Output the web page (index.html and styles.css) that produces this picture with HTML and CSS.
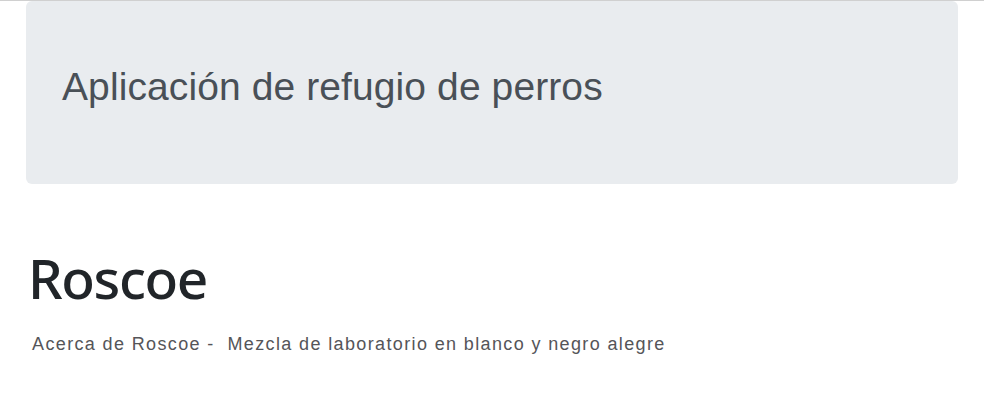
FILE: index.html
```html
<!DOCTYPE html>
<html lang="es">
<head>
<meta charset="utf-8">
<title>Aplicación de refugio de perros</title>
<link rel="stylesheet" href="styles.css">
</head>
<body>
<div class="topline"></div>
<main class="page">
  <header class="jumbotron">
    <h1 class="app-title">Aplicación de refugio de perros</h1>
  </header>
  <section class="dog">
    <h2 class="dog-name">Roscoe</h2>
    <p class="dog-desc">Acerca de Roscoe -&nbsp; Mezcla de laboratorio en blanco y negro alegre</p>
  </section>
</main>
</body>
</html>
```
FILE: styles.css
```css
html, body {
  margin: 0;
  padding: 0;
  background: #ffffff;
}
.topline {
  height: 1px;
  background: #d0d0d0;
}
.page {
  padding: 0 26px;
}
.jumbotron {
  box-sizing: border-box;
  background: #e9ecef;
  border-radius: 6px;
  height: 183px;
  padding: 63px 36px 0;
}
.app-title {
  margin: 0;
  font-family: "Liberation Sans", Arial, sans-serif;
  font-weight: 400;
  font-size: 39px;
  line-height: 1.2;
  letter-spacing: 0.1px;
  color: #495057;
}
.dog {
  padding: 64px 2px 0;
}
.dog-name {
  margin: 0;
  font-family: "Noto Sans", "Open Sans", sans-serif;
  font-weight: 500;
  font-size: 55px;
  line-height: 1.1;
  letter-spacing: -1.4px;
  color: #212529;
}
.dog-desc {
  margin: 25px 0 0 4px;
  font-family: "Liberation Sans", Arial, sans-serif;
  font-size: 18px;
  letter-spacing: 1.37px;
  color: #555559;
}
```
